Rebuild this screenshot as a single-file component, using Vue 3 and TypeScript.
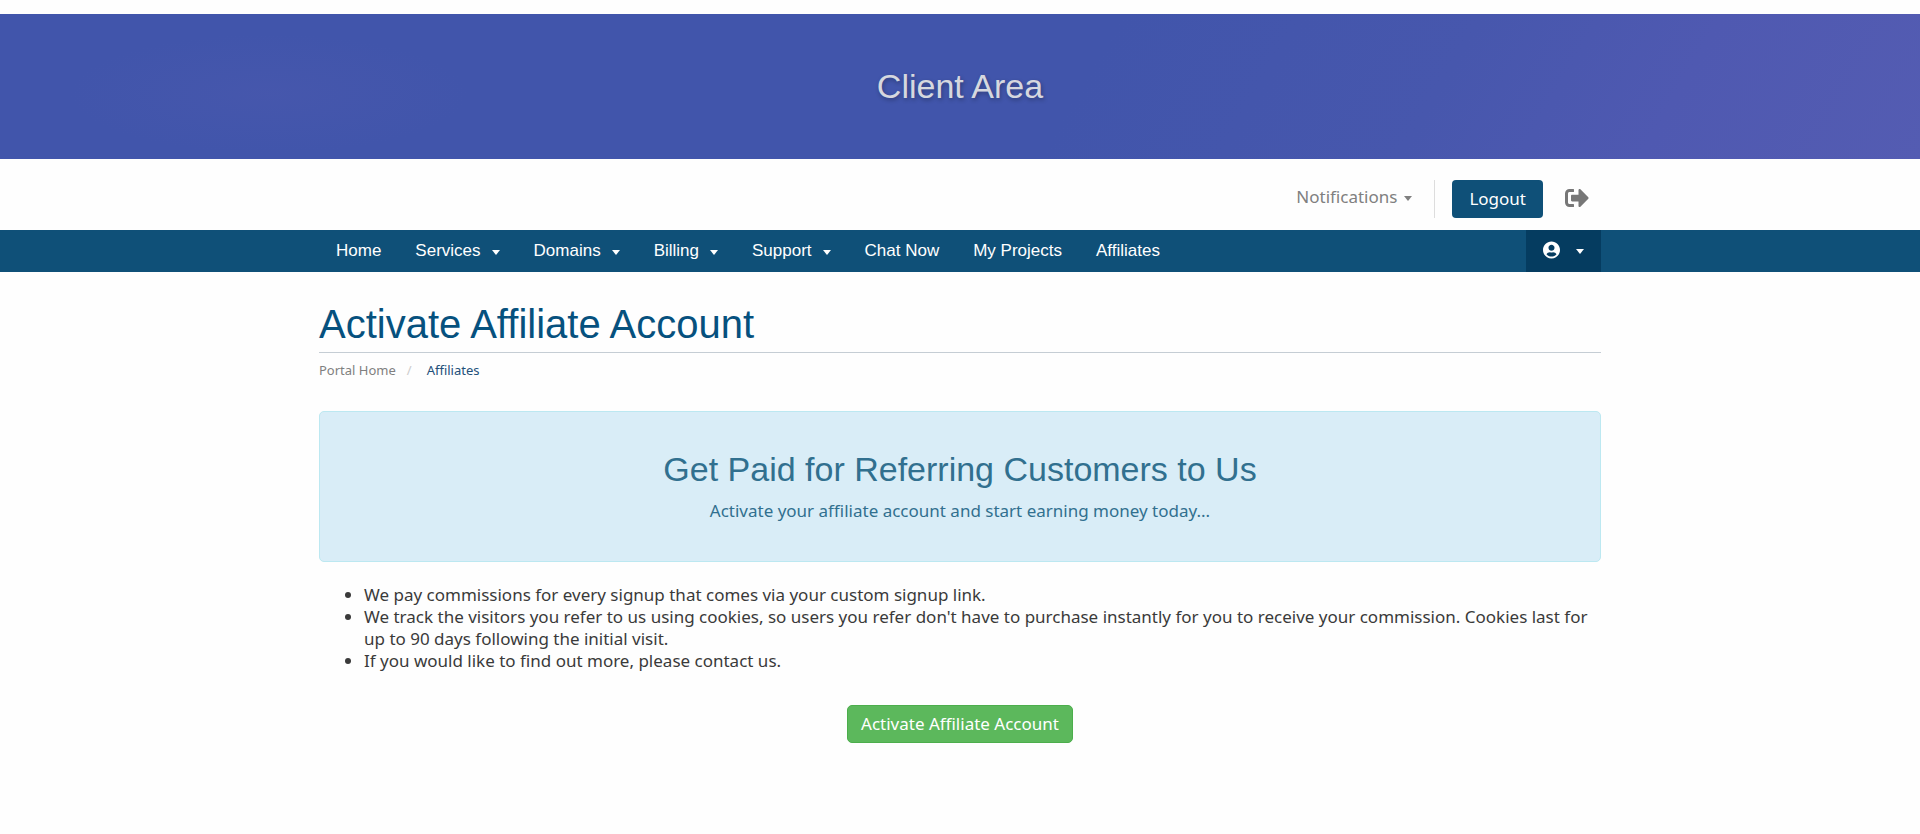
<script setup lang="ts">
interface NavItem {
  label: string
  menu: boolean
}

const navItems: NavItem[] = [
  { label: 'Home', menu: false },
  { label: 'Services', menu: true },
  { label: 'Domains', menu: true },
  { label: 'Billing', menu: true },
  { label: 'Support', menu: true },
  { label: 'Chat Now', menu: false },
  { label: 'My Projects', menu: false },
  { label: 'Affiliates', menu: false },
]

const benefits: string[] = [
  'We pay commissions for every signup that comes via your custom signup link.',
  "We track the visitors you refer to us using cookies, so users you refer don't have to purchase instantly for you to receive your commission. Cookies last for up to 90 days following the initial visit.",
  'If you would like to find out more, please contact us.',
]
</script>

<template>
  <div class="page">
    <header class="banner">
      <h2 class="banner-title">Client Area</h2>
    </header>

    <div class="container topbar">
      <button type="button" class="notifications">
        Notifications
        <span class="caret"></span>
      </button>
      <div class="session">
        <a href="#" class="logout">Logout</a>
        <a href="#" class="exit" aria-label="Sign out">
          <svg viewBox="0 0 512 512" aria-hidden="true">
            <path d="M497 273L329 441c-15 15-41 4.5-41-17v-96H152c-13.3 0-24-10.7-24-24v-96c0-13.3 10.7-24 24-24h136V88c0-21.4 25.9-32 41-17l168 168c9.3 9.4 9.3 24.6 0 34zM192 436v-40c0-6.6-5.4-12-12-12H96c-17.7 0-32-14.3-32-32V160c0-17.7 14.3-32 32-32h84c6.6 0 12-5.4 12-12V76c0-6.6-5.4-12-12-12H96c-53 0-96 43-96 96v192c0 53 43 96 96 96h84c6.6 0 12-5.4 12-12z" />
          </svg>
        </a>
      </div>
    </div>

    <nav class="navbar" aria-label="Main">
      <div class="container navbar-inner">
        <ul class="nav-list">
          <li v-for="item in navItems" :key="item.label">
            <a href="#" class="nav-link">
              {{ item.label }}
              <span v-if="item.menu" class="caret"></span>
            </a>
          </li>
        </ul>
        <button type="button" class="account" aria-label="Account">
          <svg viewBox="0 0 496 512" aria-hidden="true">
            <path d="M248 8C111 8 0 119 0 256s111 248 248 248 248-111 248-248S385 8 248 8zm0 96c48.600 0 88 39.400 88 88s-39.400 88-88 88-88-39.400-88-88 39.400-88 88-88zm0 344c-58.700 0-111.300-26.600-146.500-68.200 18.800-35.400 55.600-59.800 98.500-59.800 2.400 0 4.800.4 7.100 1.100 13 4.200 26.600 6.900 40.900 6.900 14.300 0 28-2.700 40.900-6.900 2.300-.7 4.700-1.100 7.100-1.100 42.900 0 79.700 24.400 98.500 59.800C359.300 421.400 306.700 448 248 448z" />
          </svg>
          <span class="caret"></span>
        </button>
      </div>
    </nav>

    <main class="container">
      <h1 class="heading">Activate Affiliate Account</h1>
      <ol class="breadcrumb">
        <li><a href="#">Portal Home</a></li>
        <li class="current" aria-current="page">Affiliates</li>
      </ol>

      <section class="notice">
        <h2 class="notice-title">Get Paid for Referring Customers to Us</h2>
        <p class="notice-text">Activate your affiliate account and start earning money today...</p>
      </section>

      <ul class="benefits">
        <li v-for="benefit in benefits" :key="benefit">{{ benefit }}</li>
      </ul>

      <form class="actions" @submit.prevent>
        <button type="submit" class="activate">Activate Affiliate Account</button>
      </form>
    </main>
  </div>
</template>

<style>
body {
  background: #fefefe;
}
</style>

<style scoped>
.page {
  padding-top: 14px;
  color: #3a3a3a;
  font-family: 'Noto Sans', 'DejaVu Sans', sans-serif;
  font-size: 17px;
  line-height: 22px;
}

.container {
  box-sizing: border-box;
  width: calc(100% - 32px);
  max-width: 1282px;
  margin: 0 auto;
}

a {
  color: inherit;
  text-decoration: none;
}

button {
  font: inherit;
  cursor: pointer;
}

.caret {
  display: inline-block;
  margin-top: 2px;
  border-top: 5px solid currentColor;
  border-left: 4px solid transparent;
  border-right: 4px solid transparent;
}

.banner {
  padding: 52px 16px;
  text-align: center;
  background:
    radial-gradient(200px 60px at 14% 55%, rgba(84, 92, 176, 0.25), transparent),
    linear-gradient(120deg, #4155ab 0%, #4155ab 56%, #4757ad 74%, #4f59b1 86%, #545cb2 100%);
}

.banner-title {
  margin: 0;
  color: #d6d8df;
  font-family: 'Liberation Sans', Arial, sans-serif;
  font-size: 34px;
  font-weight: 400;
  line-height: 41px;
  text-shadow: 1px 2px 4px rgba(0, 0, 0, 0.3);
}

.topbar {
  display: flex;
  align-items: center;
  justify-content: flex-end;
  padding: 21px 12px 12px 0;
}

.notifications {
  display: flex;
  align-items: center;
  gap: 7px;
  margin-right: 22px;
  padding: 0 0 4px;
  border: 0;
  background: none;
  color: #808080;
}

.session {
  display: flex;
  align-items: center;
  padding-left: 17px;
  border-left: 1px solid #ddd;
}

.logout {
  padding: 8px 17px;
  border-radius: 4px;
  background: #0f5078;
  color: #fff;
}

.exit {
  display: flex;
  margin-left: 22px;
  padding-bottom: 2px;
}

.exit svg {
  width: 24px;
  height: 24px;
  fill: #777;
}

.navbar {
  background: #0f5078;
  color: #fff;
  font-family: 'Liberation Sans', Arial, sans-serif;
}

.navbar-inner {
  display: flex;
  justify-content: space-between;
}

.nav-list {
  display: flex;
  flex-wrap: wrap;
  margin: 0;
  padding: 0;
  list-style: none;
}

.nav-link {
  display: flex;
  align-items: center;
  gap: 11px;
  padding: 10px 17px;
}

.account {
  display: flex;
  align-items: center;
  gap: 16px;
  padding: 0 17px 2px;
  border: 0;
  background: #053c60;
  color: #fff;
}

.account svg {
  width: 17px;
  height: 18px;
  fill: currentColor;
}

.heading {
  margin: 0;
  padding: 28px 0 4px;
  border-bottom: 1px solid #c5cdd4;
  color: #06517e;
  font-family: 'Liberation Sans', Arial, sans-serif;
  font-size: 40px;
  font-weight: 400;
  line-height: 48px;
}

.breadcrumb {
  display: flex;
  margin: 0;
  padding: 8px 0 31px;
  color: #808080;
  font-size: 13px;
  line-height: 19px;
  list-style: none;
}

.breadcrumb .current {
  color: #23507a;
}

.breadcrumb .current::before {
  content: '/';
  padding: 0 15px 0 11px;
  color: #ccc;
}

.notice {
  padding: 37px 16px 39px;
  border: 1px solid #bce8f1;
  border-radius: 5px;
  background: #d9edf7;
  color: #31708f;
  text-align: center;
}

.notice-title {
  margin: 0 0 10px;
  font-family: 'Liberation Sans', Arial, sans-serif;
  font-size: 34px;
  font-weight: 400;
  line-height: 41px;
}

.notice-text {
  margin: 0;
}

.benefits {
  margin: 22px 0 33px;
  padding-left: 45px;
}

.actions {
  display: flex;
  justify-content: center;
}

.activate {
  padding: 7px 13px;
  border: 1px solid #4cae4c;
  border-radius: 5px;
  background: #5cb85c;
  color: #fff;
}
</style>
